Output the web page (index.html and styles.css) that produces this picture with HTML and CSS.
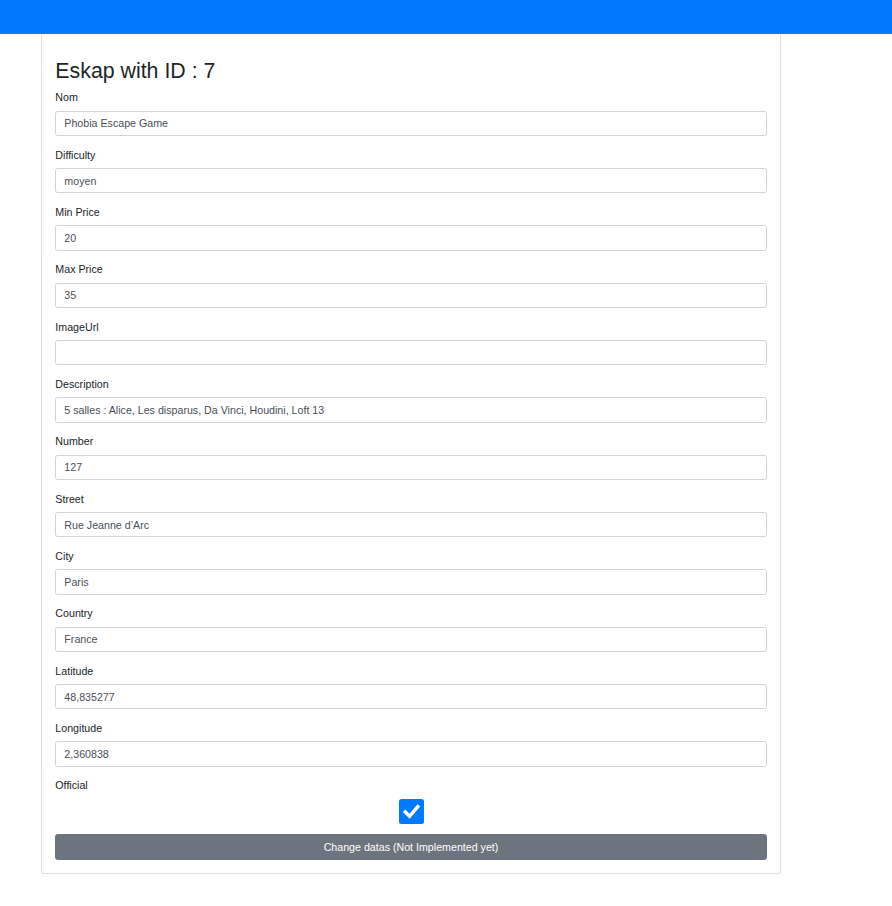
FILE: index.html
```html
<!DOCTYPE html>
<html>
<head>
<meta charset="utf-8">
<link rel="stylesheet" href="styles.css">
</head>
<body>
<div class="topbar"></div>
<div class="card">
  <h2 class="title">Eskap with ID : 7</h2>
  <form class="form">
    <div class="group"><label>Nom</label><input class="control" value="Phobia Escape Game"></div>
    <div class="group"><label>Difficulty</label><input class="control" value="moyen"></div>
    <div class="group"><label>Min Price</label><input class="control" value="20"></div>
    <div class="group"><label>Max Price</label><input class="control" value="35"></div>
    <div class="group"><label>ImageUrl</label><input class="control" value=""></div>
    <div class="group"><label>Description</label><input class="control" value="5 salles : Alice, Les disparus, Da Vinci, Houdini, Loft 13"></div>
    <div class="group"><label>Number</label><input class="control" value="127"></div>
    <div class="group"><label>Street</label><input class="control" value="Rue Jeanne d’Arc"></div>
    <div class="group"><label>City</label><input class="control" value="Paris"></div>
    <div class="group"><label>Country</label><input class="control" value="France"></div>
    <div class="group"><label>Latitude</label><input class="control" value="48,835277"></div>
    <div class="group"><label>Longitude</label><input class="control" value="2,360838"></div>
    <div class="group"><label>Official</label>
      <div class="checkrow">
        <span class="check" role="checkbox" aria-checked="true">
          <svg viewBox="0 0 26 26" width="26" height="26"><path d="M6.5 13.5 L11 18 L19.5 8" fill="none" stroke="#fff" stroke-width="3.6" stroke-linecap="square" stroke-linejoin="miter"/></svg>
        </span>
      </div>
    </div>
    <button type="button" class="btn">Change datas (Not Implemented yet)</button>
  </form>
</div>
</body>
</html>
```
FILE: styles.css
```css
* { box-sizing: border-box; }
html, body { margin: 0; padding: 0; background: #fff; }
body {
  font-family: "Liberation Sans", Arial, Helvetica, sans-serif;
  font-size: 10.667px;
  line-height: 1.5;
  color: #212529;
}
.topbar { height: 34px; background: #007bff; }
.card {
  margin-left: 41px;
  width: 740px;
  border: 1px solid rgba(0,0,0,0.125);
  border-top: none;
  border-radius: 0 0 2.67px 2.67px;
  padding: 24.5px 13.33px 13.33px;
}
.title {
  margin: 0 0 5.33px;
  font-size: 21.33px;
  font-weight: 500;
  line-height: 1.2;
  color: #212529;
}
.group { margin-bottom: 10.67px; }
.group label {
  display: block;
  margin-bottom: 5.33px;
  line-height: 16px;
}
.control {
  display: block;
  width: 100%;
  height: 25.33px;
  padding: 4px 8px;
  font-family: inherit;
  font-size: 10.667px;
  line-height: 1.5;
  color: #495057;
  background: #fff;
  border: 1px solid #ced4da;
  border-radius: 2.67px;
  outline: none;
}
.checkrow { display: flex; justify-content: center; height: 25.33px; align-items: center; }
.check {
  width: 25px;
  height: 25px;
  background: #007bff;
  border-radius: 2.5px;
  display: flex;
  align-items: center;
  justify-content: center;
}
.check svg { display: block; width: 25px; height: 25px; }
.btn {
  display: block;
  width: 100%;
  height: 25.33px;
  padding: 0;
  font-family: inherit;
  font-size: 10.667px;
  color: #fff;
  background: #6c757d;
  border: 1px solid #6c757d;
  border-radius: 2.67px;
}
```
